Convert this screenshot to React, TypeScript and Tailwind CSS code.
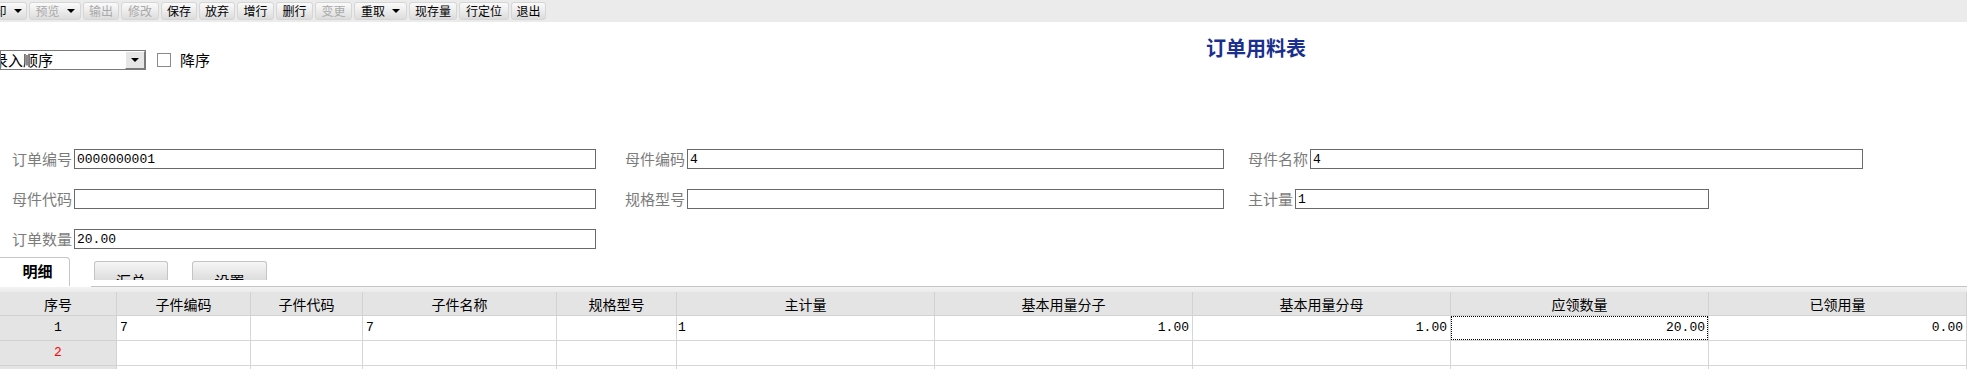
import React from "react";

function Arrow() {
  return (
    <span className="inline-block w-0 h-0 border-l-[4px] border-r-[4px] border-t-[4px] border-l-transparent border-r-transparent border-t-black" />
  );
}

function TBtn({
  label,
  w,
  disabled,
  arrow,
}: {
  label: string;
  w: string;
  disabled?: boolean;
  arrow?: boolean;
}) {
  return (
    <div
      className={`h-[18px] shrink-0 flex items-center justify-center gap-[7px] rounded-[3px] border border-[#d6d6d6] bg-gradient-to-b from-[#fafafa] via-[#ececec] to-[#dcdcdc] text-[12px] leading-none whitespace-nowrap ${
        disabled ? "text-[#a9a9a9]" : "text-black"
      } ${w}`}
    >
      <span>{label}</span>
      {arrow && <Arrow />}
    </div>
  );
}

function Field({
  label,
  value,
  w,
  ml,
}: {
  label: string;
  value?: string;
  w: string;
  ml?: string;
}) {
  return (
    <div className={`flex items-center h-[20px] shrink-0 ${w} ${ml ?? ""}`}>
      <span className="text-[15px] leading-[20px] text-[#7c7c7c] whitespace-nowrap">{label}</span>
      <div className="ml-[2px] flex-1 h-[20px] border border-[#6a6a6a] bg-white flex items-center pl-[2px] font-['Liberation_Mono',monospace] text-[13px] text-black leading-none">
        {value}
      </div>
    </div>
  );
}

const COLS = "grid grid-cols-[117px_134px_112px_194px_120px_258px_258px_258px_258px_258px]";

const headers = [
  "序号",
  "子件编码",
  "子件代码",
  "子件名称",
  "规格型号",
  "主计量",
  "基本用量分子",
  "基本用量分母",
  "应领数量",
  "已领用量",
];

export default function App() {
  const mono = "font-['Liberation_Mono',monospace] text-[13px]";
  const cell = "h-[25px] border-r border-b border-[#d6d6d6] flex items-center bg-white";
  return (
    <div className="w-[1967px] h-[369px] overflow-hidden bg-white text-black font-['Noto_Sans_CJK_SC','Noto_Sans',sans-serif]">
      {/* toolbar */}
      <div className="h-[22px] bg-[#ebebeb] flex items-start pt-[2px] gap-[2px]">
        <div className="-ml-[23px] flex">
          <TBtn label="打印" w="w-[50px]" arrow />
        </div>
        <TBtn label="预览" w="w-[52px]" arrow disabled />
        <TBtn label="输出" w="w-[36px]" disabled />
        <TBtn label="修改" w="w-[38px]" disabled />
        <TBtn label="保存" w="w-[36px]" />
        <TBtn label="放弃" w="w-[36px]" />
        <TBtn label="增行" w="w-[37px]" />
        <TBtn label="删行" w="w-[37px]" />
        <TBtn label="变更" w="w-[37px]" disabled />
        <TBtn label="重取" w="w-[53px]" arrow />
        <TBtn label="现存量" w="w-[48px]" />
        <TBtn label="行定位" w="w-[50px]" />
        <TBtn label="退出" w="w-[35px]" />
      </div>

      {/* top area */}
      <div className="h-[127px] grid grid-cols-[1206px_auto]">
        <div className="flex items-center mt-[28px] h-[20px]">
          <div className="w-[146px] h-[20px] border border-[#7a7a7a] bg-white flex items-center overflow-hidden">
            <span className="-ml-[8px] flex-1 text-[15px] leading-[18px] whitespace-nowrap">录入顺序</span>
            <div className="w-[20px] h-[18px] bg-[#e6e6e6] border-t border-l border-t-white border-l-white border-b border-r border-b-[#7a7a7a] border-r-[#7a7a7a] flex items-center justify-center">
              <Arrow />
            </div>
          </div>
          <div className="ml-[11px] w-[14px] h-[14px] border border-[#8a8a8a] bg-white" />
          <span className="ml-[9px] text-[15px] leading-[20px]">降序</span>
        </div>
        <div className="mt-[14px] text-[20px] leading-[24px] font-bold text-[#1b2f8e] whitespace-nowrap">订单用料表</div>
      </div>

      {/* form */}
      <div className="flex flex-col gap-[20px] pl-[12px]">
        <div className="flex">
          <Field label="订单编号" value="0000000001" w="w-[584px]" />
          <Field label="母件编码" value="4" w="w-[599px]" ml="ml-[29px]" />
          <Field label="母件名称" value="4" w="w-[615px]" ml="ml-[24px]" />
        </div>
        <div className="flex">
          <Field label="母件代码" w="w-[584px]" />
          <Field label="规格型号" w="w-[599px]" ml="ml-[29px]" />
          <Field label="主计量" value="1" w="w-[461px]" ml="ml-[24px]" />
        </div>
        <div className="flex">
          <Field label="订单数量" value="20.00" w="w-[584px]" />
        </div>
      </div>

      {/* tabs */}
      <div className="h-[37px] flex items-start">
        <div className="mt-[8px] w-[70px] h-[29px] bg-white border-t border-r border-[#c6c6c6] rounded-tr-[4px] flex justify-center pt-[5px]">
          <span className="text-[15px] leading-[15px] font-bold pl-[6px]">明细</span>
        </div>
        <div className="ml-[24px] mt-[12px] w-[74px] h-[19px] overflow-hidden rounded-t-[3px] border border-b-0 border-[#c4c4c4] bg-gradient-to-b from-[#f6f6f6] to-[#dddddd] flex justify-center pt-[11px]">
          <span className="text-[15px] leading-[15px]">汇总</span>
        </div>
        <div className="ml-[24px] mt-[12px] w-[75px] h-[19px] overflow-hidden rounded-t-[3px] border border-b-0 border-[#c4c4c4] bg-gradient-to-b from-[#f6f6f6] to-[#dddddd] flex justify-center pt-[11px]">
          <span className="text-[15px] leading-[15px]">设置</span>
        </div>
      </div>
      <div className="h-px bg-[#c4c4c4] ml-[91px]" />
      <div className="h-[5px] bg-gradient-to-b from-[#f3f3f3] to-[#ebebeb]" />

      {/* table */}
      <div className={COLS}>
        {headers.map((h) => (
          <div
            key={h}
            className="h-[24px] bg-[#e4e4e4] border-r border-b border-[#d2d2d2] flex items-center justify-center text-[14px] leading-none"
          >
            {h}
          </div>
        ))}

        <div className={`h-[25px] border-r border-b border-[#d2d2d2] bg-[#e4e4e4] flex items-center justify-center ${mono}`}>1</div>
        <div className={`${cell} pl-[3px] ${mono}`}>7</div>
        <div className={cell} />
        <div className={`${cell} pl-[3px] ${mono}`}>7</div>
        <div className={cell} />
        <div className={`${cell} pl-[1px] ${mono}`}>1</div>
        <div className={`${cell} justify-end pr-[3px] ${mono}`}>1.00</div>
        <div className={`${cell} justify-end pr-[3px] ${mono}`}>1.00</div>
        <div className="h-[25px] border-r border-b border-[#d6d6d6] bg-white flex items-center">
          <div className={`w-full h-full border border-dotted border-black flex items-center justify-end pr-[2px] ${mono}`}>20.00</div>
        </div>
        <div className={`${cell} justify-end pr-[3px] ${mono}`}>0.00</div>

        <div className={`h-[25px] border-r border-b border-[#d2d2d2] bg-[#e4e4e4] flex items-center justify-center ${mono} text-[#ff0000]`}>2</div>
        <div className={cell} />
        <div className={cell} />
        <div className={cell} />
        <div className={cell} />
        <div className={cell} />
        <div className={cell} />
        <div className={cell} />
        <div className={cell} />
        <div className={cell} />

        <div className="h-[25px] border-r border-b border-[#d2d2d2] bg-[#e4e4e4]" />
        <div className={cell} />
        <div className={cell} />
        <div className={cell} />
        <div className={cell} />
        <div className={cell} />
        <div className={cell} />
        <div className={cell} />
        <div className={cell} />
        <div className={cell} />
      </div>
    </div>
  );
}
